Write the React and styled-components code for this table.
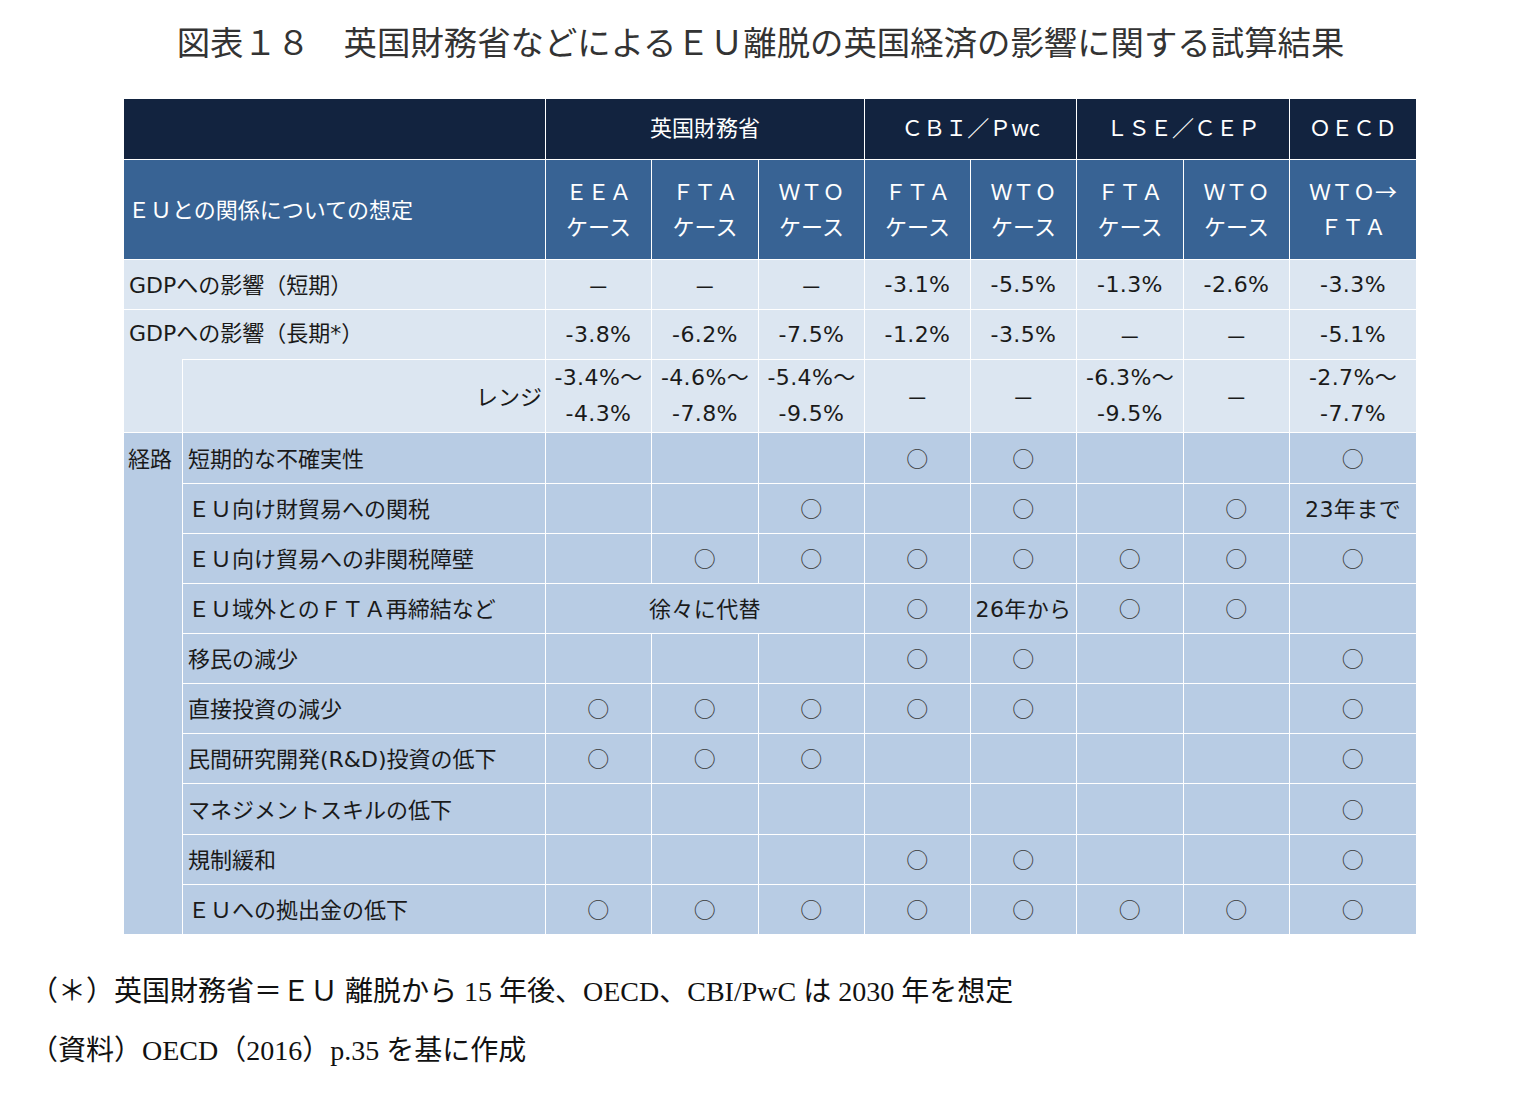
import React from "react";
import styled, { createGlobalStyle } from "styled-components";

const GlobalStyle = createGlobalStyle`
  html, body {
    margin: 0;
    padding: 0;
    background: #fff;
  }
`;

const Page = styled.div`
  width: 1521px;
  min-height: 1110px;
  padding-top: 22px;
  box-sizing: border-box;
`;

const Title = styled.h1`
  margin: 0;
  text-align: center;
  font-family: "Liberation Serif", "Noto Sans CJK JP", serif;
  font-weight: 400;
  font-size: 33.4px;
  line-height: 44px;
  color: #333;
`;

const Table = styled.table`
  margin: 32px 0 0 123px;
  width: 1294px;
  table-layout: fixed;
  border-collapse: collapse;
  font-family: "DejaVu Sans", "Noto Sans CJK JP", sans-serif;
  font-size: 22px;
  color: #1a1a1a;
`;

const Row = styled.tr`
  height: ${(p) => p.$h}px;
`;

const Cell = styled.td`
  padding: 0;
  border: 1px solid #fff;
  text-align: center;
  vertical-align: middle;
  white-space: nowrap;
  letter-spacing: 0.4px;
  background: ${(p) => p.$bg};
  ${(p) => p.$noRight && "border-right: none;"}
  ${(p) => p.$noLeft && "border-left: none;"}
`;

const HeadCell = styled(Cell)`
  color: #fff;
  font-family: "Noto Sans CJK JP", sans-serif;
  font-size: 22px;
  line-height: 35px;
  letter-spacing: 0;
  padding-bottom: ${(p) => p.$pb || 0}px;
`;

const LabelCell = styled(Cell)`
  text-align: left;
  padding-left: 5px;
  letter-spacing: 0;
  overflow: visible;
`;

const RangeLabel = styled(Cell)`
  text-align: right;
  padding-right: 3px;
  letter-spacing: 0;
  font-family: "Noto Sans CJK JP", sans-serif;
`;

const RouteHead = styled(Cell)`
  vertical-align: top;
  text-align: left;
  padding-left: 4px;
  line-height: 48px;
  letter-spacing: 0;
  font-family: "Noto Sans CJK JP", sans-serif;
`;

const Stack = styled.div`
  line-height: 36px;
`;

const Mark = styled.span`
  font-family: "Noto Sans CJK JP", sans-serif;
  font-size: 22px;
  color: #3a3a3a;
`;

const Notes = styled.div`
  margin: 27px 0 0 30px;
  font-family: "Liberation Serif", "Noto Sans CJK JP", serif;
  font-size: 28px;
  color: #111;
`;

const Note = styled.div`
  line-height: 59px;
`;

const DARK = "#12233f";
const MID = "#386394";
const LIGHT = "#dce6f1";
const PATH = "#b8cce4";

const widths = [59, 363, 106, 107, 106, 106, 106, 107, 106, 127];

const D = "－";
const O = "○";

const shortRow = [D, D, D, "-3.1%", "-5.5%", "-1.3%", "-2.6%", "-3.3%"];
const longRow = ["-3.8%", "-6.2%", "-7.5%", "-1.2%", "-3.5%", D, D, "-5.1%"];
const rangeRow = [
  ["-3.4%～", "-4.3%"],
  ["-4.6%～", "-7.8%"],
  ["-5.4%～", "-9.5%"],
  D,
  D,
  ["-6.3%～", "-9.5%"],
  D,
  ["-2.7%～", "-7.7%"],
];

const paths = [
  { label: "短期的な不確実性", h: 51, v: ["", "", "", O, O, "", "", O] },
  { label: "ＥＵ向け財貿易への関税", v: ["", "", O, "", O, "", O, "23年まで"] },
  { label: "ＥＵ向け貿易への非関税障壁", v: ["", O, O, O, O, O, O, O] },
  { label: "ＥＵ域外とのＦＴＡ再締結など", span: "徐々に代替", v: [O, "26年から", O, O, ""] },
  { label: "移民の減少", v: ["", "", "", O, O, "", "", O] },
  { label: "直接投資の減少", v: [O, O, O, O, O, "", "", O] },
  { label: "民間研究開発(R&D)投資の低下", v: [O, O, O, "", "", "", "", O] },
  { label: "マネジメントスキルの低下", h: 51, v: ["", "", "", "", "", "", "", O] },
  { label: "規制緩和", v: ["", "", "", O, O, "", "", O] },
  { label: "ＥＵへの拠出金の低下", v: [O, O, O, O, O, O, O, O] },
];

const cases = [
  ["ＥＥＡ", "ケース"],
  ["ＦＴＡ", "ケース"],
  ["ＷＴＯ", "ケース"],
  ["ＦＴＡ", "ケース"],
  ["ＷＴＯ", "ケース"],
  ["ＦＴＡ", "ケース"],
  ["ＷＴＯ", "ケース"],
  ["ＷＴＯ→", "ＦＴＡ"],
];

const Value = ({ v }) => (v === O ? <Mark>{O}</Mark> : v);

export default function App() {
  return (
    <Page>
      <GlobalStyle />
      <Title>図表１８　英国財務省などによるＥＵ離脱の英国経済の影響に関する試算結果</Title>
      <Table>
        <colgroup>
          {widths.map((w, i) => (
            <col key={i} style={{ width: w }} />
          ))}
        </colgroup>
        <tbody>
          <Row $h={61}>
            <HeadCell colSpan={2} $bg={DARK} />
            <HeadCell colSpan={3} $bg={DARK} $pb={5}>英国財務省</HeadCell>
            <HeadCell colSpan={2} $bg={DARK} $pb={5}>ＣＢＩ／Ｐwc</HeadCell>
            <HeadCell colSpan={2} $bg={DARK} $pb={5}>ＬＳＥ／ＣＥＰ</HeadCell>
            <HeadCell $bg={DARK} $pb={5}>ＯＥＣＤ</HeadCell>
          </Row>
          <Row $h={100}>
            <HeadCell colSpan={2} $bg={MID} $pb={3} style={{ textAlign: "left", paddingLeft: 4 }}>
              ＥＵとの関係についての想定
            </HeadCell>
            {cases.map(([a, b], i) => (
              <HeadCell key={i} $bg={MID} $pb={3}>
                {a}
                <br />
                {b}
              </HeadCell>
            ))}
          </Row>
          <Row $h={50}>
            <LabelCell colSpan={2} $bg={LIGHT} style={{ paddingBottom: 3 }}>
              GDPへの影響（短期）
            </LabelCell>
            {shortRow.map((v, i) => (
              <Cell key={i} $bg={LIGHT}>{v}</Cell>
            ))}
          </Row>
          <Row $h={50}>
            <LabelCell rowSpan={2} $bg={LIGHT} $noRight style={{ verticalAlign: "top", lineHeight: "48px" }}>
              GDPへの影響（長期*）
            </LabelCell>
            <Cell $bg={LIGHT} $noLeft />
            {longRow.map((v, i) => (
              <Cell key={i} $bg={LIGHT}>{v}</Cell>
            ))}
          </Row>
          <Row $h={73}>
            <RangeLabel $bg={LIGHT} style={{ paddingBottom: 3 }}>
              レンジ
            </RangeLabel>
            {rangeRow.map((v, i) => (
              <Cell key={i} $bg={LIGHT}>
                {Array.isArray(v) ? (
                  <Stack>
                    {v[0]}
                    <br />
                    {v[1]}
                  </Stack>
                ) : (
                  v
                )}
              </Cell>
            ))}
          </Row>
          {paths.map((p, r) => (
            <Row key={r} $h={p.h || 50}>
              {r === 0 && (
                <RouteHead rowSpan={paths.length} $bg={PATH}>
                  経路
                </RouteHead>
              )}
              <LabelCell $bg={PATH} style={{ paddingBottom: 3 }}>
                {p.label}
              </LabelCell>
              {p.span && (
                <Cell colSpan={3} $bg={PATH} style={{ paddingBottom: 3 }}>
                  {p.span}
                </Cell>
              )}
              {p.v.map((v, i) => (
                <Cell key={i} $bg={PATH} style={{ paddingBottom: 3 }}>
                  <Value v={v} />
                </Cell>
              ))}
            </Row>
          ))}
        </tbody>
      </Table>
      <Notes>
        <Note>（＊）英国財務省＝ＥＵ 離脱から 15 年後、OECD、CBI/PwC は 2030 年を想定</Note>
        <Note>（資料）OECD（2016）p.35 を基に作成</Note>
      </Notes>
    </Page>
  );
}
